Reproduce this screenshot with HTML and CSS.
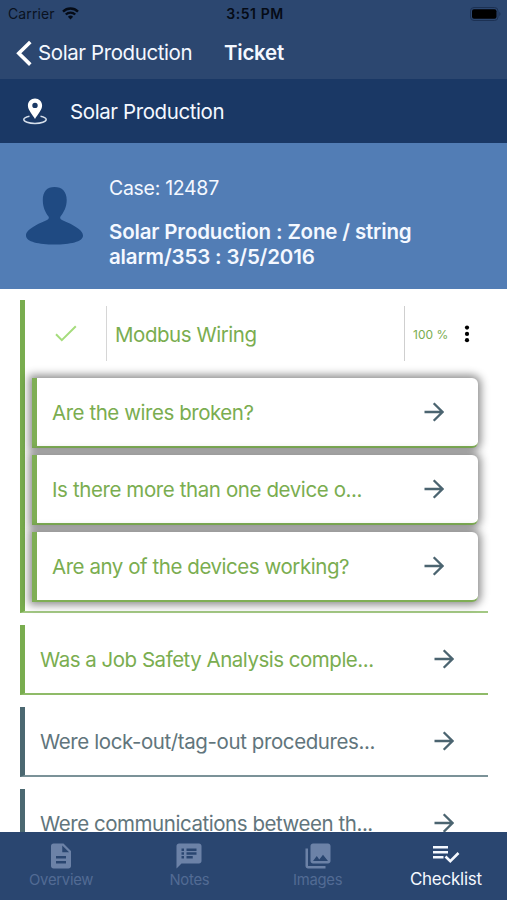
FILE: index.html
```html
<!DOCTYPE html>
<html lang="en">
<head>
<meta charset="utf-8">
<title>Ticket</title>
<link rel="stylesheet" href="styles.css">
</head>
<body>
<svg class="defs" width="0" height="0">
  <symbol id="arrow" viewBox="0 0 20 20"><path d="M.5 10h17.6M9.7 1.2 18.5 10l-8.800 8.800" fill="none" stroke="currentColor" stroke-width="2.300"/></symbol>
</svg>
<div class="screen">
  <header class="top">
    <div class="status">
      <div class="carrier"><span>Carrier</span>
        <svg width="17" height="13" viewBox="0 0 17 13" fill="none" stroke="#050b16" stroke-width="2.3"><path d="M1 4.6a10.6 10.6 0 0 1 15 0M3.8 7.5a6.6 6.6 0 0 1 9.4 0"/><path d="M8.5 12.5 5.9 9.800a3.7 3.7 0 0 1 5.2 0z" fill="#050b16" stroke="none"/></svg>
      </div>
      <span class="time">3:51 PM</span>
      <svg class="battery" width="32" height="14" viewBox="0 0 32 14"><rect x=".5" y=".5" width="27.5" height="13" rx="3.5" fill="none" stroke="#1c3153"/><rect x="2" y="2.3" width="24.5" height="9.4" rx="2" fill="#000"/><path d="M29.3 4.8q2.4 2.2 0 4.4z" fill="#1c3153"/></svg>
    </div>
    <nav class="nav">
      <svg width="17" height="27" viewBox="0 0 17 27"><path d="M15.300 2 3.800 13.300l11.500 11.300" fill="none" stroke="#fff" stroke-width="3.6"/></svg>
      <span class="back">Solar Production</span>
      <h1 class="title">Ticket</h1>
    </nav>
  </header>
  <section class="place">
    <svg width="24" height="27" viewBox="0 0 24 27"><path fill="#fff" fill-rule="evenodd" d="M12 .5c4 0 7.100 3 7.100 7C19.100 12 14.500 16.500 12 21 9.500 16.500 4.900 12 4.900 7.500c0-4 3.100-7 7.100-7zm0 4.200a2.700 2.700 0 1 0 0 5.400 2.700 2.700 0 0 0 0-5.400z"/><path d="M6.500 18.200C3 18.900.8 20.100.8 21.500c0 2.200 5 3.900 11.200 3.900s11.200-1.700 11.200-3.900c0-1.400-2.200-2.600-5.700-3.300" fill="none" stroke="#d6dfeb" stroke-width="1.500"/></svg>
    <span class="place-name">Solar Production</span>
  </section>
  <section class="case">
    <svg width="58" height="58" viewBox="0 0 58 58" fill="#1f4a82"><path d="M28.500 0C36 0 40.700 4.500 40.700 13c0 7-3 12.500-6.200 16.500-.8 1.200-.4 2.500 1.500 3.500 8 3.500 21 9 21 15.500C57 55 44 57.500 28.500 57.500S0 55 0 48.500C0 42 13 36.500 21 33c1.900-1 2.300-2.300 1.500-3.500C19.300 25.500 16.800 20 16.800 13 16.800 4.500 21 0 28.500 0z"/></svg>
    <div class="case-text">
      <div class="case-no">Case: 12487</div>
      <div class="case-title"><span>Solar Production : Zone / string</span><br><span>alarm/353 : 3/5/2016</span></div>
    </div>
  </section>
  <main class="list">
    <section class="group">
      <div class="group-head">
        <div class="tick"><svg width="22" height="17" viewBox="0 0 22 17"><path d="m1 9.300 5.800 5.800L20.800 1.200" fill="none" stroke="#a5dc7c" stroke-width="2"/></svg></div>
        <div class="group-name"><span>Modbus Wiring</span></div>
        <span class="percent">100 %</span>
        <svg width="6" height="18" viewBox="0 0 6 18"><circle cx="3" cy="2.600" r="2.100"/><circle cx="3" cy="8.900" r="2.100"/><circle cx="3" cy="15.200" r="2.100"/></svg>
      </div>
      <div class="cards">
        <div class="card"><span>Are the wires broken?</span><svg class="arrow"><use href="#arrow"/></svg></div>
        <div class="card"><span class="looser">Is there more than one device o...</span><svg class="arrow"><use href="#arrow"/></svg></div>
        <div class="card"><span>Are any of the devices working?</span><svg class="arrow"><use href="#arrow"/></svg></div>
      </div>
    </section>
    <div class="row done"><span class="tighter">Was a Job Safety Analysis comple...</span><svg class="arrow"><use href="#arrow"/></svg></div>
    <div class="row"><span class="looser">Were lock-out/tag-out procedures...</span><svg class="arrow"><use href="#arrow"/></svg></div>
    <div class="row"><span>Were communications between th...</span><svg class="arrow"><use href="#arrow"/></svg></div>
  </main>
  <footer class="tabs">
    <div class="tab"><svg width="30" height="30" viewBox="0 0 24 24"><path fill="currentColor" d="M14 2H6c-1.100 0-2 .9-2 2v16c0 1.100.9 2 2 2h12c1.100 0 2-.9 2-2V8l-6-6zm2 16H8v-2h8v2zm0-4H8v-2h8v2zm-3-5V3.500L18.500 9H13z"/></svg><span>Overview</span></div>
    <div class="tab"><svg width="30" height="30" viewBox="0 0 24 24"><path fill="currentColor" d="M20 2H4c-1.100 0-2 .9-2 2v18l4-4h14c1.100 0 2-.9 2-2V4c0-1.100-.9-2-2-2zM8 14H6v-2h2v2zm0-3H6V9h2v2zm0-3H6V6h2v2zm7 6h-5v-2h5v2zm3-3h-8V9h8v2zm0-3h-8V6h8v2z"/></svg><span>Notes</span></div>
    <div class="tab"><svg width="30" height="30" viewBox="0 0 24 24"><path fill="currentColor" d="M22 16V4c0-1.100-.9-2-2-2H8c-1.100 0-2 .9-2 2v12c0 1.100.9 2 2 2h12c1.100 0 2-.9 2-2zm-11-4 2.030 2.710L16 11l4 5H8l3-4zM2 6v14c0 1.100.9 2 2 2h14v-2H4V6H2z"/></svg><span>Images</span></div>
    <div class="tab active"><svg width="28" height="30" viewBox="0 0 28 30"><path d="M1 6.200h15M1 11.200h15M1 16.200h10.500" fill="none" stroke="currentColor" stroke-width="2.600"/><path d="m13.500 15.500 4.800 4.700 8.200-8.200" fill="none" stroke="currentColor" stroke-width="2.600"/></svg><span>Checklist</span></div>
  </footer>
</div>
</body>
</html>
```
FILE: styles.css
```css
* { box-sizing: border-box; }
body { margin: 0; font-family: Inter, "Liberation Sans", sans-serif; background: #fff; }
.defs { display: none; }
.screen { width: 507px; height: 900px; display: flex; flex-direction: column; overflow: hidden; }
span { white-space: nowrap; }

.top { height: 79px; background: #2c4770; }
.status { height: 27px; display: grid; grid-template-columns: 1fr auto 1fr; align-items: center; padding: 0 5px 0 8px; font-size: 14px; color: #0a1220; }
.carrier { display: flex; align-items: center; gap: 7px; letter-spacing: .1px; }
.time { font-weight: 600; color: #050b16; letter-spacing: .55px; }
.battery { justify-self: end; }
.nav { height: 52px; display: flex; align-items: center; padding-left: 15px; color: #f4f8ff; font-size: 20.5px; }
.back { margin-left: 6px; width: 186px; padding-bottom: 2px; letter-spacing: -.4px; }
.title { margin: 0; padding-bottom: 2px; font-size: 20.5px; font-weight: 600; letter-spacing: -.25px; }

.place { height: 64px; background: #1a3865; display: flex; align-items: center; padding-left: 23px; gap: 23px; color: #f4f8ff; font-size: 20.5px; letter-spacing: -.4px; }
.case { height: 146px; background: #527db5; display: flex; padding: 44px 0 0 26px; gap: 25px; color: #f4f8ff; }
.case-text { margin-top: -12px; }
.case-no { font-size: 19.5px; line-height: 26px; letter-spacing: -.3px; }
.case-title { margin-top: 19px; font-size: 20.5px; line-height: 24.5px; font-weight: 600; letter-spacing: -.16px; }

.list { height: 543px; padding: 11px 19px 0 20px; overflow: hidden; display: flex; flex-direction: column; gap: 12px; font-size: 20.5px; letter-spacing: -.45px; }
.group, .row { flex: none; border-left: 5px solid #4b6871; border-bottom: 2px solid #7b9298; }
.group { height: 313px; border-left-color: #79ad4f; border-bottom-color: #a3c884; color: #7aad50; }
.group-head { height: 55px; margin-top: 6px; display: flex; align-items: center; }
.tick { width: 82px; height: 55px; border-right: 1px solid #d6d6d6; display: flex; align-items: center; justify-content: center; }
.group-name { width: 298px; height: 55px; padding: 1px 0 0 8px; border-right: 1px solid #cfcfcf; display: flex; align-items: center; }
.percent { width: 51px; padding: 1px 0 0 8px; font-size: 12px; letter-spacing: 0; }
.group-head > svg { margin-left: 7.5px; }

.cards { padding: 17px 10px 0 7px; display: flex; flex-direction: column; gap: 7px; }
.card, .row { height: 70px; display: flex; align-items: center; justify-content: space-between; padding: 0 34.5px 0 15px; }
.card { border-left: 5px solid #7fae55; border-bottom: 2px solid #7fae55; border-radius: 0 6px 6px 0; background: #fff; box-shadow: 0 0 9px 3px rgba(0, 0, 0, .45); }
.looser { letter-spacing: -.4px; }
.tighter { letter-spacing: -.49px; }
.arrow { width: 20px; height: 20px; color: #4b6470; flex: none; }
.row { color: #61757c; }
.row.done { border-left-color: #79ad4f; border-bottom-color: #8fbb68; color: #7aad50; }

.tabs { height: 68px; margin: 0 -3px; background: #2a4670; display: grid; grid-template-columns: repeat(4, 1fr); }
.tab { display: flex; flex-direction: column; align-items: center; padding-top: 9px; color: #6c82a7; font-size: 14.8px; }
.tab span { color: #526b94; line-height: 18px; letter-spacing: -.25px; }
.tab.active, .tab.active span { color: #f4f8ff; }
.tab.active span { font-size: 17px; line-height: 16px; }
```
